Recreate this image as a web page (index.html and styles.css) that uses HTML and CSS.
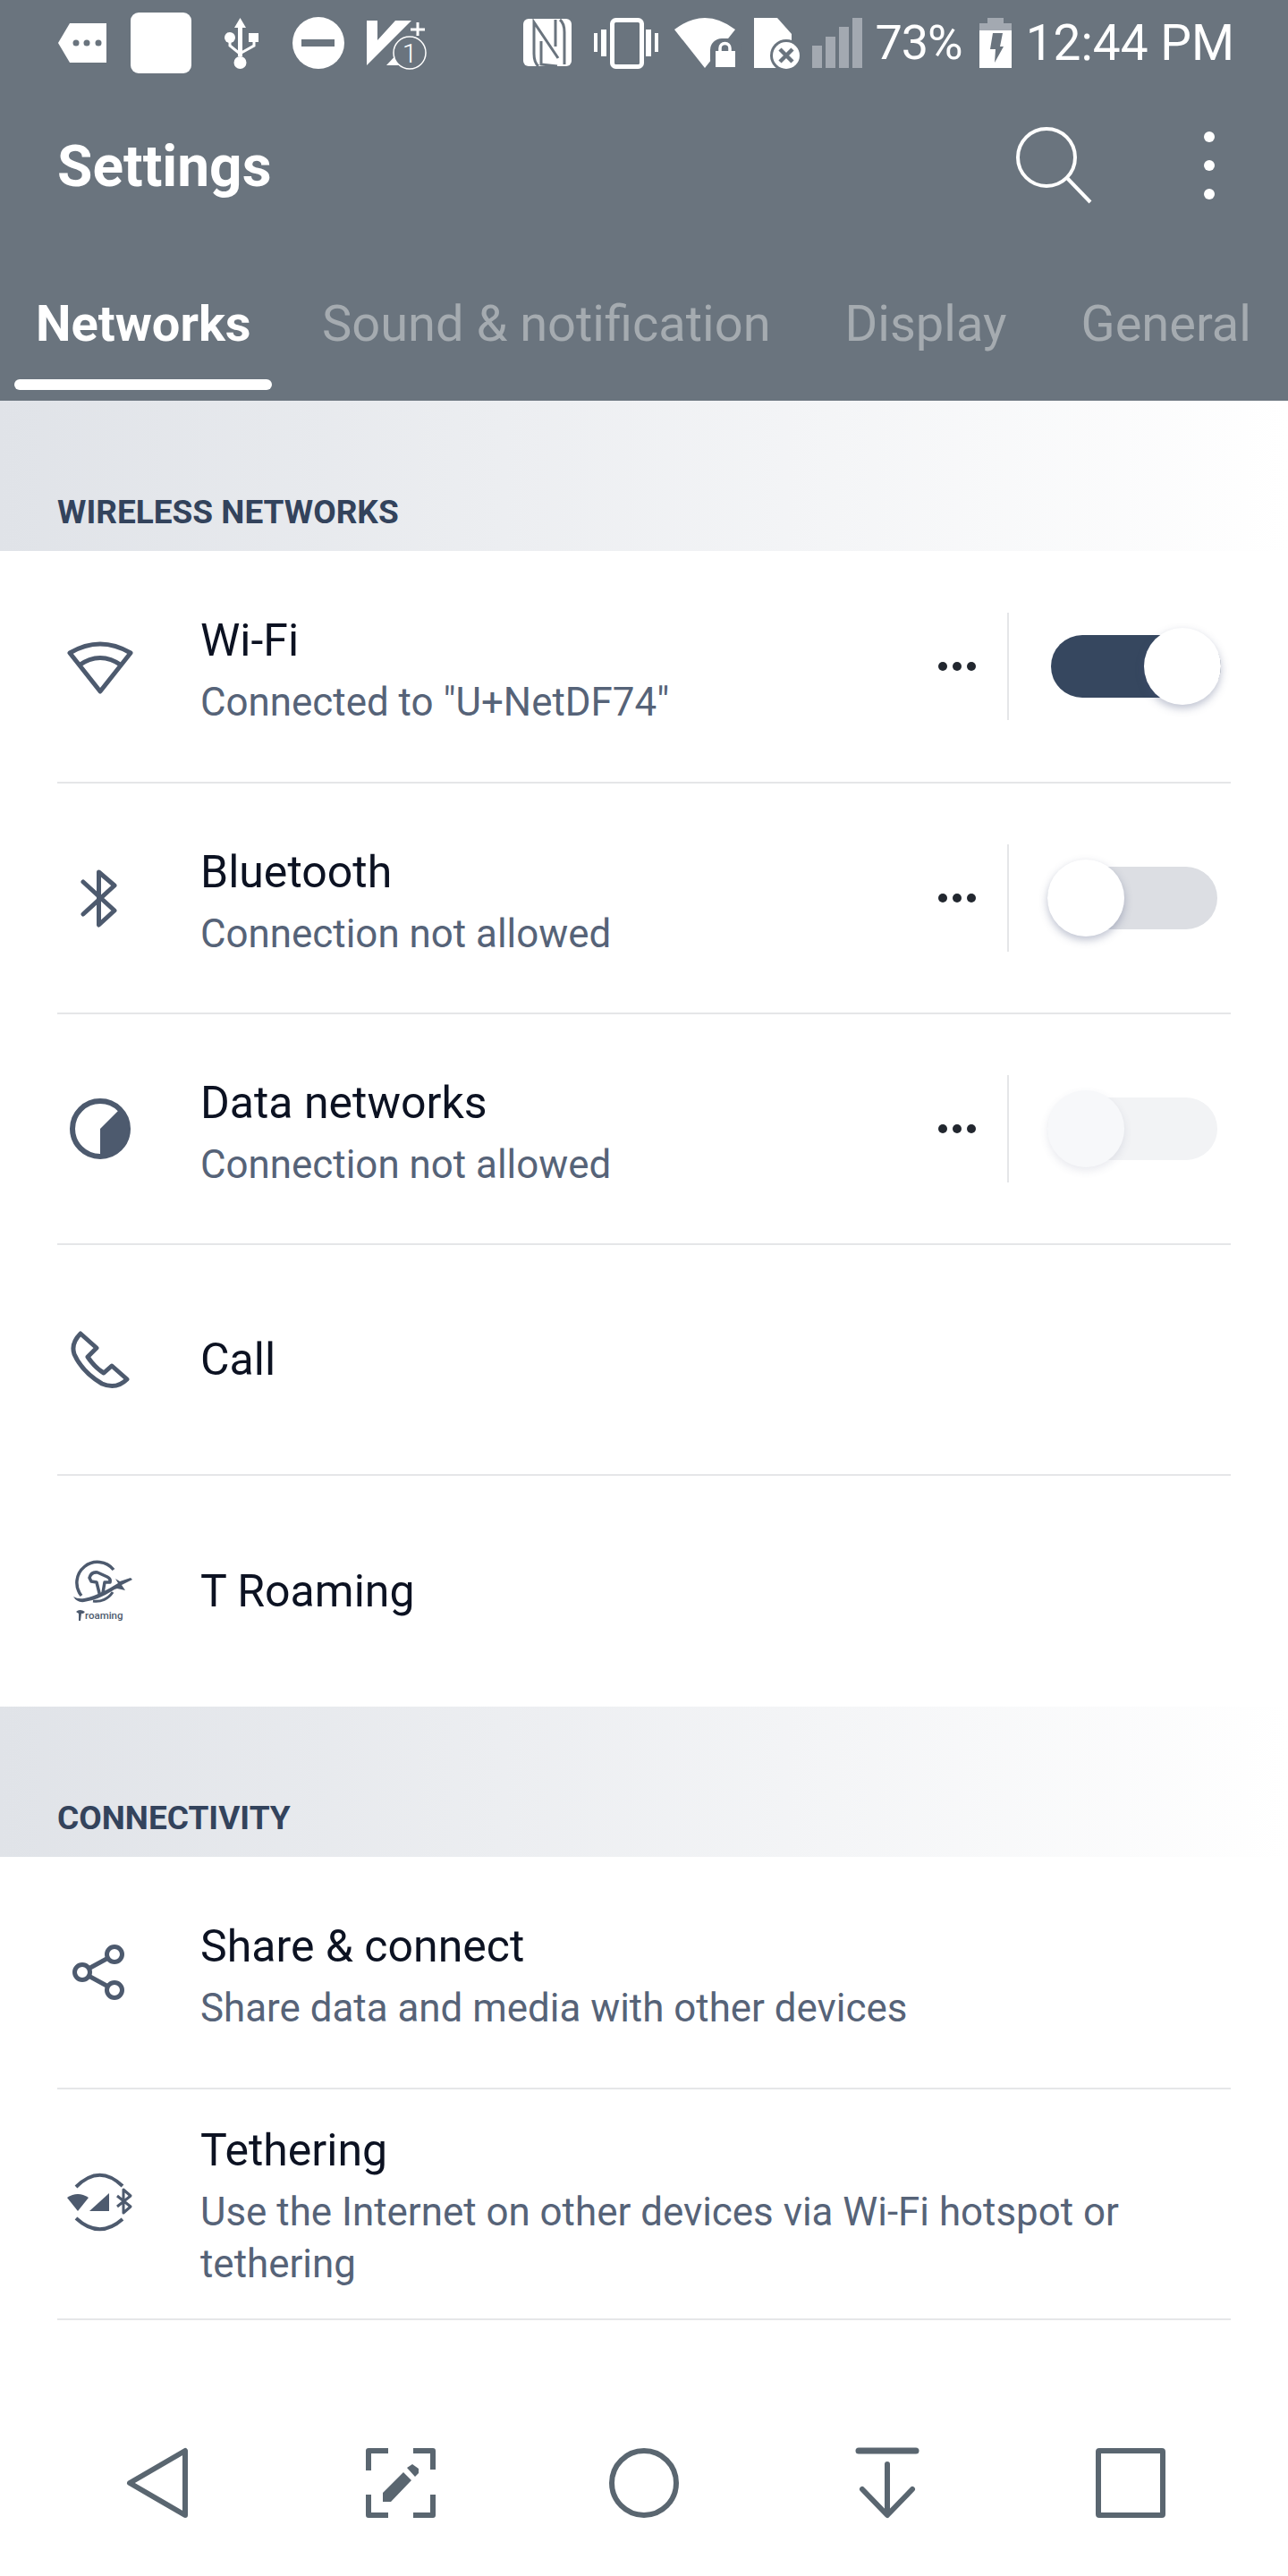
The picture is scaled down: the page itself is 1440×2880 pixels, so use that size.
FILE: index.html
```html
<!DOCTYPE html>
<html lang="en">
  <head>
    <meta charset="UTF-8" />
    <title>Settings</title>
    <link rel="stylesheet" href="styles.css">
  </head>
  <body>
    <header class="appbar">
      <!-- Status bar -->
      <div class="status">
        <svg class="status-left" width="413" height="68" viewBox="65 14 413 68" aria-hidden="true">
          <path d="M65 48 L78 26 H119 V70 H78 Z" fill="#fff" />
          <g fill="#6a747e">
            <circle cx="85" cy="48" r="3.5" />
            <circle cx="97" cy="48" r="3.5" />
            <circle cx="110" cy="48" r="3.5" />
          </g>
          <rect x="146" y="14" width="68" height="68" rx="9" fill="#fff" />
          <g fill="#fff">
            <path d="M268.5 20 L275 31 H271 V63 H266 V31 H262 Z" />
            <circle cx="268.5" cy="70" r="7" />
            <circle cx="257" cy="42" r="6" />
            <rect x="278" y="37" width="11" height="10" />
          </g>
          <path d="M257 44 V51 L268 60 L284 51 V45" fill="none" stroke="#fff" stroke-width="3" />
          <circle cx="356" cy="48" r="29" fill="#fff" />
          <rect x="337" y="44" width="37" height="8" fill="#6a747e" />
          <path d="M410 23 H422 V45 L442 23 H460 L410 73 Z" fill="#fff" />
          <path d="M432 73 L448 56 V73 Z" fill="#fff" />
          <path d="M467 25 V40 M459 33 H475" stroke="#fff" stroke-width="3" />
          <circle cx="458" cy="59" r="18" fill="#6a747e" stroke="#fff" stroke-width="1.5" />
          <text x="458" y="70" class="status-one">1</text>
        </svg>
        <div class="status-right">
          <svg width="380" height="60" viewBox="585 18 380 60" aria-hidden="true">
            <rect x="586" y="21" width="54" height="53" rx="6" fill="#fff" />
            <path d="M603 74 Q598 70 598 60 V25 L625 65 M622 22 V52 M627 22 Q632 26 632 36 V72 M606 46 V72 L624 74" fill="none" stroke="#6a747e" stroke-width="3" />
            <rect x="685.5" y="22.5" width="33" height="52" rx="4" fill="none" stroke="#fff" stroke-width="5" />
            <g fill="#fff">
              <rect x="665" y="37" width="4" height="21" />
              <rect x="673" y="33" width="6" height="30" />
              <rect x="723" y="33" width="6" height="30" />
              <rect x="733" y="37" width="4" height="21" />
              <path d="M755 33 Q789 7 823 33 L789 76 Z" />
            </g>
            <rect x="795" y="43" width="36" height="36" rx="13" fill="#6a747e" />
            <rect x="801" y="57" width="22" height="18" fill="#fff" />
            <path d="M806 58 V54 A5.5 5.5 0 0 1 817 54 V58" fill="none" stroke="#fff" stroke-width="3.5" />
            <path d="M844 20 H870 L886 38 V76 H844 Z" fill="#fff" />
            <circle cx="880" cy="62" r="18" fill="#6a747e" />
            <circle cx="880" cy="62" r="15" fill="#fff" />
            <path d="M873 55 L887 69 M887 55 L873 69" stroke="#6a747e" stroke-width="4.5" />
            <g fill="#a3a9b1">
              <rect x="909" y="51" width="11" height="25" />
              <rect x="924" y="41" width="11" height="35" />
              <rect x="939" y="30" width="11" height="46" />
              <rect x="954" y="20" width="11" height="56" />
            </g>
          </svg>
          <span class="status-pct">73%</span>
          <svg class="status-batt" width="36" height="56" viewBox="0 0 36 56" aria-hidden="true">
            <path d="M9 0 H27 V6 H36 V14 H0 V6 H9 Z" fill="#a3a9b1" />
            <rect y="14" width="36" height="42" fill="#fff" />
            <path d="M15 17 H26 L23 32 H27 L17 50 L18 35 H12 Z" fill="#6a747e" />
          </svg>
          <span class="status-time">12:44 PM</span>
        </div>
      </div>

      <!-- Toolbar -->
      <div class="toolbar">
        <h1 class="toolbar-title">Settings</h1>
        <svg class="toolbar-search" width="88" height="88" viewBox="0 0 88 88" aria-hidden="true">
          <circle cx="35" cy="35" r="32" fill="none" stroke="#fff" stroke-width="4" />
          <path d="M58 58 L84 85" stroke="#fff" stroke-width="4" />
        </svg>
        <svg class="toolbar-more" width="12" height="76" viewBox="0 0 12 76" aria-hidden="true">
          <circle cx="6" cy="6" r="6" fill="#fff" />
          <circle cx="6" cy="38" r="6" fill="#fff" />
          <circle cx="6" cy="70" r="6" fill="#fff" />
        </svg>
      </div>

      <!-- Tabs -->
      <nav class="tabs">
        <a class="tab tab-active">Networks<span class="tab-bar"></span></a>
        <a class="tab">Sound &amp; notification</a>
        <a class="tab">Display</a>
        <a class="tab">General</a>
      </nav>
    </header>

    <main class="content">
      <div class="section-head">WIRELESS NETWORKS</div>

      <div class="row">
        <div class="row-icon">
          <svg width="96" height="96" viewBox="0 0 96 96" aria-hidden="true">
            <path d="M48 76 L14 33 Q48 13 82 33 Z" class="line" stroke-width="5" />
            <path d="M24 47 Q48 30 72 47" class="line" stroke-width="5" />
          </svg>
        </div>
        <div class="row-text">
          <div class="row-title">Wi-Fi</div>
          <div class="row-sub">Connected to "U+NetDF74"</div>
        </div>
        <div class="row-actions">
          <span class="dots"><i></i><i></i><i></i></span>
          <span class="vline"></span>
          <span class="toggle toggle-on"><span class="track"></span><span class="knob"></span></span>
        </div>
      </div>

      <div class="row">
        <div class="row-icon">
          <svg width="96" height="96" viewBox="0 0 96 96" aria-hidden="true">
            <path d="M29 30 L64 62 L46.5 78 V19 L64 34 L29 66" class="line line-round" stroke-width="5" />
          </svg>
        </div>
        <div class="row-text">
          <div class="row-title">Bluetooth</div>
          <div class="row-sub">Connection not allowed</div>
        </div>
        <div class="row-actions">
          <span class="dots"><i></i><i></i><i></i></span>
          <span class="vline"></span>
          <span class="toggle"><span class="track"></span><span class="knob"></span></span>
        </div>
      </div>

      <div class="row">
        <div class="row-icon">
          <svg width="96" height="96" viewBox="0 0 96 96" aria-hidden="true">
            <circle cx="48" cy="48" r="31" class="line" stroke-width="6" />
            <path d="M48 48 L70 26 A31 31 0 0 1 48 79 Z" class="solid" />
          </svg>
        </div>
        <div class="row-text">
          <div class="row-title">Data networks</div>
          <div class="row-sub">Connection not allowed</div>
        </div>
        <div class="row-actions">
          <span class="dots"><i></i><i></i><i></i></span>
          <span class="vline"></span>
          <span class="toggle toggle-off"><span class="track"></span><span class="knob"></span></span>
        </div>
      </div>

      <div class="row">
        <div class="row-icon">
          <svg width="96" height="96" viewBox="0 0 96 96" aria-hidden="true">
            <path d="M26 19 L44 35 L34 45 Q42 57 52 63 L61 55 L78 70 Q66 82 50 75 Q28 62 19 42 Q15 30 26 19 Z" class="line" stroke-width="5" />
          </svg>
        </div>
        <div class="row-text">
          <div class="row-title">Call</div>
        </div>
      </div>

      <div class="row row-last">
        <div class="row-icon">
          <svg width="96" height="96" viewBox="0 0 96 96" aria-hidden="true">
            <path d="M27 53 A22 22 0 1 1 63 24" class="line" stroke-width="3.5" />
            <path d="M62 49 A22 22 0 0 1 40 59" class="line" stroke-width="3" />
            <path d="M36 33 Q38 26 45 27 L56 32 Q60 34 59 38 H53 L51 50 Q48 54 47 50 L44 38 L38 37 Z" class="line" stroke-width="3.5" />
            <path d="M18 54 Q22 61 30 60 Q46 58 64 46 L67 45 L76 47 L72 41 L84 35 L82 33 L70 37 L65 34 L68 39 Q46 53 30 56 Q23 57 18 54 Z" class="solid" />
            <path d="M21 71 Q25 67 31 71 L29 73 L27 73 L26 81 L24 81 L24 73 Z" class="solid" />
            <text x="31" y="79" class="roaming-word">roaming</text>
          </svg>
        </div>
        <div class="row-text">
          <div class="row-title">T Roaming</div>
        </div>
      </div>

      <div class="section-head">CONNECTIVITY</div>

      <div class="row">
        <div class="row-icon">
          <svg width="96" height="96" viewBox="0 0 96 96" aria-hidden="true">
            <path d="M35 44 L57 32 M35 52 L57 64" class="line" stroke-width="5" />
            <circle cx="64" cy="28" r="8.5" class="line" stroke-width="5" />
            <circle cx="28" cy="48" r="8.5" class="line" stroke-width="5" />
            <circle cx="64" cy="68" r="8.5" class="line" stroke-width="5" />
          </svg>
        </div>
        <div class="row-text">
          <div class="row-title">Share &amp; connect</div>
          <div class="row-sub">Share data and media with other devices</div>
        </div>
      </div>

      <div class="row row-tall">
        <div class="row-icon">
          <svg width="96" height="96" viewBox="0 0 96 96" aria-hidden="true">
            <path d="M21 31 Q47 5 73 30 M21 66 Q47 90 73 67" class="line" stroke-width="4" />
            <path d="M11 43 Q23 35 35 43 L23 58 Z" class="solid" />
            <path d="M36 58 L58 38 V58 Z" class="solid" />
            <path d="M67 41 L82 53 L74 60 V34 L82 41 L67 53" class="line" stroke-width="3" />
          </svg>
        </div>
        <div class="row-text">
          <div class="row-title">Tethering</div>
          <div class="row-sub">Use the Internet on other devices via Wi-Fi hotspot or tethering</div>
        </div>
      </div>
    </main>

    <!-- Barra de navegacao -->
    <footer class="navbar">
      <svg width="80" height="80" viewBox="0 0 80 80" aria-hidden="true">
        <path d="M9 40 L71 4 V76 Z" class="nav-line" stroke-width="6" />
      </svg>
      <svg width="80" height="80" viewBox="0 0 80 80" aria-hidden="true">
        <path d="M26 4 H4 V26 M54 4 H76 V25 M4 53 V76 H26 M76 53 V76 H54" class="nav-line nav-butt" stroke-width="6" />
        <path d="M20 51 L43 28 L52 37 L29 61 H20 Z M47 23 L53 19 L60 24 V29 L56 33 Z" fill="#5a6670" />
      </svg>
      <svg width="80" height="80" viewBox="0 0 80 80" aria-hidden="true">
        <circle cx="40" cy="40" r="36" class="nav-line" stroke-width="6" />
      </svg>
      <svg width="80" height="80" viewBox="0 0 80 80" aria-hidden="true">
        <path d="M8 4 H72" class="nav-line" stroke-width="7" />
        <path d="M40 19 V75 M12 47 L40 76 L68 47" class="nav-line" stroke-width="6" />
      </svg>
      <svg width="80" height="80" viewBox="0 0 80 80" aria-hidden="true">
        <rect x="4" y="4" width="72" height="72" rx="1" class="nav-line" stroke-width="6" />
      </svg>
    </footer>
  </body>
</html>
```

FILE: styles.css
```css
html,
body {
  margin: 0;
  padding: 0;
}
body {
  width: 1440px;
  height: 2880px;
  display: flex;
  flex-direction: column;
  background-color: #fff;
  font-family: Roboto, "Liberation Sans", sans-serif;
  overflow: hidden;
}

/* Cabecalho */
.appbar {
  height: 448px;
  background-color: #6a747e;
  color: #fff;
  flex-shrink: 0;
}
.status {
  height: 96px;
  display: flex;
  align-items: center;
  justify-content: space-between;
  padding: 0 60px 0 65px;
}
.status-left,
.status-right svg {
  display: block;
}
.status-right {
  display: flex;
  align-items: center;
}
.status-one {
  font-size: 30px;
  fill: #fff;
  text-anchor: middle;
  font-weight: 300;
}
.status-pct,
.status-time {
  font-weight: 400;
  line-height: 60px;
  white-space: nowrap;
}
.status-pct {
  margin-left: 14px;
  font-size: 54px;
  letter-spacing: -1px;
}
.status-time {
  font-size: 55px;
}
.status-batt {
  margin: 0 16px 0 19px;
}
.toolbar {
  height: 178px;
  display: flex;
  align-items: center;
  padding: 0 82px 0 64px;
}
.toolbar-title {
  margin: 0;
  padding-top: 3px;
  font-size: 64px;
  font-weight: 700;
  flex: 1;
}
.toolbar-search {
  margin-right: 123px;
}
.tabs {
  height: 174px;
  display: flex;
  padding-left: 16px;
}
.tab {
  padding: 55px 25px 0;
  margin-right: 33px;
  font-size: 56px;
  line-height: 66px;
  color: #a5abb0;
  white-space: nowrap;
}
.tab-active {
  color: #fff;
  font-weight: 700;
  width: 288px;
  box-sizing: border-box;
  padding: 55px 0 0 24px;
  margin-right: 31px;
}
.tab-bar {
  display: block;
  width: 288px;
  height: 12px;
  margin: 29px 0 0 -24px;
  border-radius: 6px;
  background-color: #fff;
}

/* Lista */
.content {
  flex: 1;
}
.section-head {
  height: 168px;
  box-sizing: border-box;
  display: flex;
  align-items: flex-end;
  padding: 0 0 20px 64px;
  background: linear-gradient(90deg, #e0e3e8, #fff);
  color: #33435c;
  font-size: 37px;
  line-height: 46px;
  font-weight: 700;
}
.row {
  height: 258px;
  margin: 0 64px;
  display: flex;
  align-items: center;
  border-bottom: 2px solid #e5e6e8;
  box-sizing: border-box;
}
.section-head + .row {
  height: 260px;
}
.row-last {
  border-bottom: 0;
}
.row-tall {
  padding-bottom: 4px;
}
.row-icon {
  width: 96px;
  margin-right: 64px;
  flex-shrink: 0;
}
.row-icon svg {
  display: block;
}
.row-text {
  flex: 1;
}
.row-title {
  font-size: 50px;
  line-height: 80px;
  color: #0c1222;
}
.row-sub {
  font-size: 43.9px;
  line-height: 58px;
  color: #566378;
}
.row-actions {
  display: flex;
  align-items: center;
  padding-right: 11px;
}
.dots {
  display: flex;
  gap: 6px;
}
.dots i {
  width: 10px;
  height: 10px;
  border-radius: 50%;
  background-color: #22272f;
}
.vline {
  width: 2px;
  height: 120px;
  margin: 0 43px 0 35px;
  background-color: #e5e6e8;
}

/* Interruptores */
.toggle {
  position: relative;
  display: block;
  width: 194px;
  height: 86px;
}
.track {
  position: absolute;
  top: 8px;
  left: 0;
  width: 190px;
  height: 70px;
  border-radius: 35px;
  background-color: #dcdee3;
}
.knob {
  position: absolute;
  top: 0;
  left: 0;
  width: 86px;
  height: 86px;
  border-radius: 50%;
  background-color: #fff;
  box-shadow: 0 4px 10px rgba(70, 80, 120, 0.35);
}
.toggle-on .track {
  left: 4px;
  background-color: #36475f;
}
.toggle-on .knob {
  left: 108px;
}
.toggle-off .track {
  background-color: #f2f3f5;
}
.toggle-off .knob {
  background-color: #f7f8fa;
  box-shadow: 0 4px 10px rgba(70, 80, 120, 0.12);
}

/* Icones */
.line {
  fill: none;
  stroke: #4d5a6e;
  stroke-linejoin: round;
}
.line-round {
  stroke-linecap: round;
}
.solid {
  fill: #4d5a6e;
}
.roaming-word {
  font-size: 11.5px;
  font-weight: 500;
  fill: #4d5a6e;
}
.nav-line {
  fill: none;
  stroke: #5a6670;
  stroke-linejoin: round;
  stroke-linecap: round;
}
.nav-butt {
  stroke-linecap: butt;
}

/* Barra de navegacao */
.navbar {
  height: 144px;
  display: grid;
  grid-template-columns: repeat(5, 1fr);
  justify-items: center;
  align-content: start;
  padding: 0 40px;
  flex-shrink: 0;
}
```
